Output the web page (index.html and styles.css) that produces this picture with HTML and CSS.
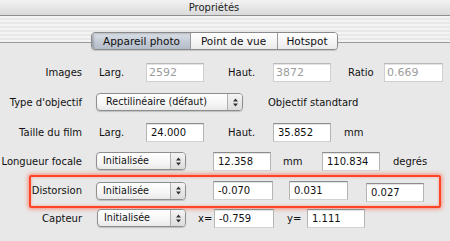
FILE: index.html
```html
<!DOCTYPE html>
<html lang="fr">
<head>
  <meta charset="UTF-8">
  <meta name="viewport" content="width=device-width, initial-scale=1.0">
  <title>Propriétés</title>
  <link rel="stylesheet" href="styles.css">
</head>
<body>
  <div class="window">
    <div class="titlebar">Propriétés</div>

    <div class="tabbar">
      <div class="tabs">
        <span class="tab tab-1 active">Appareil photo</span>
        <span class="tab tab-2">Point de vue</span>
        <span class="tab tab-3">Hotspot</span>
      </div>
    </div>

    <div class="panel">
      <div class="row">
        <span class="lbl">Images</span>
        <span class="unit u-larg">Larg.</span>
        <input class="field" type="text" value="2592" disabled>
        <span class="unit u-haut">Haut.</span>
        <input class="field" type="text" value="3872" disabled>
        <span class="unit u-ratio">Ratio</span>
        <input class="field f-ratio" type="text" value="0.669" disabled>
      </div>

      <div class="row">
        <span class="lbl">Type d'objectif</span>
        <div class="popup popup-wide">
          <span class="popup-text">Rectilinéaire (défaut)</span>
          <span class="arrows"><svg width="7" height="9" viewBox="0 0 7 9"><path d="M3.5 0.5 L6 3.5 H1 Z M3.5 8.5 L6 5.5 H1 Z" fill="#333"/></svg></span>
        </div>
        <span class="note">Objectif standtard</span>
      </div>

      <div class="row">
        <span class="lbl">Taille du film</span>
        <span class="unit u-larg">Larg.</span>
        <input class="field" type="text" value="24.000">
        <span class="unit u-haut">Haut.</span>
        <input class="field" type="text" value="35.852">
        <span class="unit u-mm">mm</span>
      </div>

      <div class="row row-short">
        <span class="lbl">Longueur focale</span>
        <div class="popup">
          <span class="popup-text">Initialisée</span>
          <span class="arrows"><svg width="7" height="9" viewBox="0 0 7 9"><path d="M3.5 0.5 L6 3.5 H1 Z M3.5 8.5 L6 5.5 H1 Z" fill="#333"/></svg></span>
        </div>
        <input class="field f-first" type="text" value="12.358">
        <span class="unit u-mm2">mm</span>
        <input class="field" type="text" value="110.834">
        <span class="unit u-deg">degrés</span>
      </div>

      <div class="focus-box">
        <div class="row row-boxed">
          <span class="lbl">Distorsion</span>
          <div class="popup">
            <span class="popup-text">Initialisée</span>
            <span class="arrows"><svg width="7" height="9" viewBox="0 0 7 9"><path d="M3.5 0.5 L6 3.5 H1 Z M3.5 8.5 L6 5.5 H1 Z" fill="#333"/></svg></span>
          </div>
          <input class="field f-first f-wide" type="text" value="-0.070">
          <input class="field f-k2" type="text" value="0.031">
          <input class="field f-k3" type="text" value="0.027">
        </div>
      </div>

      <div class="row row-last">
        <span class="lbl">Capteur</span>
        <div class="popup popup-cap">
          <span class="popup-text">Initialisée</span>
          <span class="arrows"><svg width="7" height="9" viewBox="0 0 7 9"><path d="M3.5 0.5 L6 3.5 H1 Z M3.5 8.5 L6 5.5 H1 Z" fill="#333"/></svg></span>
        </div>
        <span class="unit u-x">x=</span>
        <input class="field f-wide" type="text" value="-0.759">
        <span class="unit u-y">y=</span>
        <input class="field" type="text" value="1.111">
      </div>
    </div>
  </div>
</body>
</html>
```

FILE: styles.css
```css
body {
  margin: 0;
  background: #e8e8e8;
  font-family: "DejaVu Sans", Verdana, sans-serif;
  font-size: 10px;
  color: #111;
  overflow: hidden;
}

.window {
  width: 450px;
  height: 241px;
  overflow: hidden;
}

/* title bar */
.titlebar {
  height: 15px;
  line-height: 15px;
  padding-right: 22px;
  text-align: center;
  color: #222;
  background: linear-gradient(#f2f2f2, #dadada);
  border-bottom: 1px solid #8e8e8e;
}

/* tab strip, with the rule behind the segmented control */
.tabbar {
  height: 35px;
  box-sizing: border-box;
  padding: 16px 22px 0 0;
  display: flex;
  justify-content: center;
  align-items: flex-start;
  background:
    linear-gradient(transparent 0 26px, #9a9a9a 26px 27px, #e8e8e8 27px),
    repeating-linear-gradient(#f3f3f3 0 2px, #e8e8e8 2px 4px);
}

.tabs {
  display: flex;
  height: 18px;
  border: 1px solid #8a8a8a;
  border-radius: 4px;
  overflow: hidden;
  box-sizing: border-box;
  box-shadow: 0 1px 1px rgba(0, 0, 0, 0.15);
}

.tab {
  font-size: 10.5px;
  line-height: 16px;
  text-align: center;
  background: linear-gradient(#ffffff, #f4f4f4 60%, #ebebeb);
  color: #111;
}

.tab + .tab {
  border-left: 1px solid #9a9a9a;
}

.tab-1 { width: 98px; padding-left: 2px; box-sizing: border-box; }
.tab-2 { width: 86px; }
.tab-3 { width: 59px; }

.tab.active {
  background: linear-gradient(#dde2e9, #c3cad5 55%, #b4bdca);
  box-shadow: inset 2px 1px 2px rgba(0, 0, 0, 0.18);
}

/* form rows */
.panel {
  padding-top: 6px;
}

.row {
  display: flex;
  align-items: center;
  height: 30px;
}

.row-short { height: 28px; }
.row-last { height: 20px; }

.lbl {
  flex: none;
  width: 82px;
  text-align: right;
  white-space: nowrap;
}

.unit {
  flex: none;
  box-sizing: border-box;
  white-space: nowrap;
}

.u-larg { width: 64px; padding-left: 17px; }
.u-haut { width: 69px; padding-left: 24px; }
.u-ratio { width: 53px; padding-left: 17px; }
.u-mm { padding-left: 13px; }
.u-mm2 { width: 51px; padding-left: 12px; }
.u-deg { padding-left: 13px; }
.u-x { margin-left: 12px; width: 16px; }
.u-y { margin-left: 13px; width: 20px; }

.note {
  margin-left: 25px;
  white-space: nowrap;
}

.field {
  flex: none;
  width: 58px;
  height: 19px;
  box-sizing: border-box;
  margin: 0;
  padding: 0 0 0 4px;
  border: 1px solid #b4b4b4;
  border-top-color: #8c8c8c;
  border-bottom-color: #d2d2d2;
  border-radius: 0;
  background: #fff;
  box-shadow: inset 0 1px 0 #e4e4e4;
  font-family: "DejaVu Sans", Verdana, sans-serif;
  font-size: 10px;
  color: #111;
  outline: none;
}

.field:disabled {
  color: #9c9c9c;
  font-size: 11px;
  padding-left: 2px;
  background: #fff;
  border-color: #cfcfcf;
  border-top-color: #b8b8b8;
}

.f-ratio { width: 59px; }
.f-first { margin-left: 27px; }
.f-wide { width: 60px; }
.f-k2 { margin-left: 16px; width: 59px; }
.f-k3 { margin-left: 18px; margin-top: 4px; }

/* pop-up buttons */
.popup {
  flex: none;
  display: flex;
  width: 90px;
  height: 18px;
  margin-left: 14px;
  box-sizing: border-box;
  border: 1px solid #8e8e8e;
  border-radius: 4px;
  background: linear-gradient(#ffffff, #f6f6f6 60%, #e9e9e9);
  box-shadow: 0 1px 1px rgba(0, 0, 0, 0.18);
  overflow: hidden;
}

.popup-wide { width: 147px; }
.popup-cap { margin-left: 15px; width: 89px; }

.popup-text {
  flex: 1;
  padding-left: 6px;
  font-size: 9.6px;
  line-height: 16px;
  white-space: nowrap;
}

.popup-wide .popup-text { padding-left: 9px; }

.arrows {
  flex: none;
  width: 14px;
  display: flex;
  align-items: center;
  justify-content: center;
  border-left: 1px solid #b0b0b0;
  background: linear-gradient(#f4f4f4, #dcdcdc);
}

/* highlighted distortion block */
.focus-box {
  margin: 0 9px 0 29px;
  height: 33px;
  box-sizing: border-box;
  padding-bottom: 2px;
  border: 2px solid #ff4526;
  border-radius: 2px;
  box-shadow: 0 0 4px 1px rgba(255, 80, 50, 0.6), inset 0 0 3px rgba(255, 80, 50, 0.45);
}

.row-boxed {
  height: 27px;
}

.row-boxed .lbl {
  width: 51px;
}
```
